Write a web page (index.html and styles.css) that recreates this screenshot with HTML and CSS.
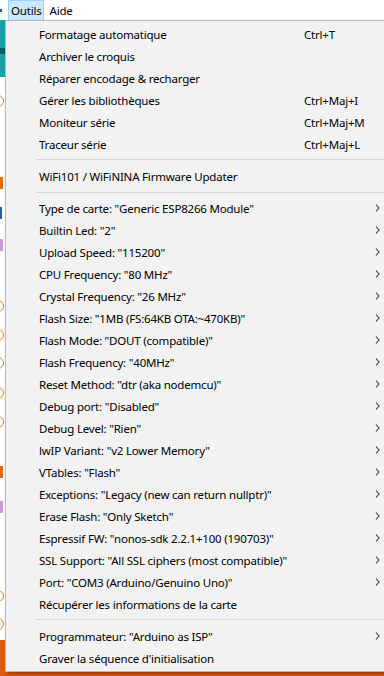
FILE: index.html
```html
<!DOCTYPE html>
<html lang="fr">
  <head>
    <meta charset="UTF-8" />
    <meta name="viewport" content="width=device-width, initial-scale=1"><title>Outils</title>
    <link rel="stylesheet" href="styles.css">
  </head>
  <body>
    <div class="menubar">
      <span class="menu-cut"></span>
      <span class="menu-title active">Outils</span>
      <span class="menu-title">Aide</span>
    </div>

    <div class="ide">
      <div class="toolbar"></div>
      <div class="toolbar-dark"></div>
      <div class="tabs"></div>
      <div class="editor">
        <span class="ring m18"></span>
        <span class="mark orange m70"></span>
        <span class="mark blue m18"></span>
        <span class="mark purple m20"></span>
        <span class="ring m49"></span>
        <span class="ring m17"></span>
        <span class="ring m16"></span>
        <span class="ring m18"></span>
        <span class="ring m17"></span>
        <span class="mark orange m38"></span>
        <span class="mark purple m23"></span>
        <span class="ring m77"></span>
        <span class="ring m16"></span>
      </div>
      <div class="console"></div>
    </div>

    <div class="dropdown">
      <div class="item"><span></span><span>Formatage automatique</span><span>Ctrl+T</span><span></span></div>
      <div class="item"><span></span><span>Archiver le croquis</span><span></span><span></span></div>
      <div class="item"><span></span><span>Réparer encodage &amp; recharger</span><span></span><span></span></div>
      <div class="item"><span></span><span>Gérer les bibliothèques</span><span>Ctrl+Maj+I</span><span></span></div>
      <div class="item"><span></span><span>Moniteur série</span><span>Ctrl+Maj+M</span><span></span></div>
      <div class="item"><span></span><span>Traceur série</span><span>Ctrl+Maj+L</span><span></span></div>
      <div class="sep"></div>
      <div class="item"><span></span><span>WiFi101 / WiFiNINA Firmware Updater</span><span></span><span></span></div>
      <div class="sep sep-low"></div>
      <div class="item sub"><span></span><span>Type de carte: "Generic ESP8266 Module"</span><span></span><span class="arrow"></span></div>
      <div class="item sub"><span></span><span>Builtin Led: "2"</span><span></span><span class="arrow"></span></div>
      <div class="item sub"><span></span><span>Upload Speed: "115200"</span><span></span><span class="arrow"></span></div>
      <div class="item sub"><span></span><span>CPU Frequency: "80 MHz"</span><span></span><span class="arrow"></span></div>
      <div class="item sub"><span></span><span>Crystal Frequency: "26 MHz"</span><span></span><span class="arrow"></span></div>
      <div class="item sub"><span></span><span>Flash Size: "1MB (FS:64KB OTA:~470KB)"</span><span></span><span class="arrow"></span></div>
      <div class="item sub"><span></span><span>Flash Mode: "DOUT (compatible)"</span><span></span><span class="arrow"></span></div>
      <div class="item sub"><span></span><span>Flash Frequency: "40MHz"</span><span></span><span class="arrow"></span></div>
      <div class="item sub"><span></span><span>Reset Method: "dtr (aka nodemcu)"</span><span></span><span class="arrow"></span></div>
      <div class="item sub"><span></span><span>Debug port: "Disabled"</span><span></span><span class="arrow"></span></div>
      <div class="item sub"><span></span><span>Debug Level: "Rien"</span><span></span><span class="arrow"></span></div>
      <div class="item sub"><span></span><span>lwIP Variant: "v2 Lower Memory"</span><span></span><span class="arrow"></span></div>
      <div class="item sub"><span></span><span>VTables: "Flash"</span><span></span><span class="arrow"></span></div>
      <div class="item sub"><span></span><span>Exceptions: "Legacy (new can return nullptr)"</span><span></span><span class="arrow"></span></div>
      <div class="item sub"><span></span><span>Erase Flash: "Only Sketch"</span><span></span><span class="arrow"></span></div>
      <div class="item sub"><span></span><span>Espressif FW: "nonos-sdk 2.2.1+100 (190703)"</span><span></span><span class="arrow"></span></div>
      <div class="item sub"><span></span><span>SSL Support: "All SSL ciphers (most compatible)"</span><span></span><span class="arrow"></span></div>
      <div class="item sub"><span></span><span>Port: "COM3 (Arduino/Genuino Uno)"</span><span></span><span class="arrow"></span></div>
      <div class="item"><span></span><span>Récupérer les informations de la carte</span><span></span><span></span></div>
      <div class="sep"></div>
      <div class="item sub"><span></span><span>Programmateur: "Arduino as ISP"</span><span></span><span class="arrow"></span></div>
      <div class="item"><span></span><span>Graver la séquence d'initialisation</span><span></span><span></span></div>
    </div>

    <script>
      // same chevron for every submenu entry
      const chevron =
        '<svg width="5" height="8" viewBox="0 0 5 8"><path d="M1 0.5 L4 4 L1 7.5" fill="none" stroke="#3c3c3c" stroke-width="1.1"/></svg>';
      document.querySelectorAll(".arrow").forEach((el) => (el.innerHTML = chevron));
    </script>
  </body>
</html>
```

FILE: styles.css
```css
body {
  margin: 0;
  width: 384px;
  height: 676px;
  overflow: hidden;
  position: relative;
  font-family: "Noto Sans", "Liberation Sans", sans-serif;
  font-size: 11.5px;
  letter-spacing: -0.2px;
  color: #000;
  background: #fff;
}

.menubar {
  height: 20px;
  display: flex;
  align-items: stretch;
  background: #fff;
}

.menu-cut {
  width: 2px;
  height: 3px;
  margin: 9px 6px 0 0;
  background: #1e5fb4;
}

.menu-title {
  padding: 0 3px 0 3px;
  line-height: 19px;
  border: 1px solid transparent;
  border-bottom: none;
}

.menu-title.active {
  background: #cce8ff;
  border-color: #99d1ff;
  padding: 0 2px 0 2px;
  margin-right: 1px;
}

.ide {
  height: 656px;
  display: flex;
  flex-direction: column;
}

.toolbar {
  height: 28px;
  background: #17a1a5;
}

.toolbar-dark {
  height: 6px;
  background: #006468;
}

.tabs {
  height: 23px;
  background: #17a1a5;
}

.editor {
  flex: 1;
  background: #fff;
  overflow: hidden;
}

.ring {
  display: block;
  width: 10px;
  height: 10px;
  margin-left: -8px;
  border: 1px solid #e5802f;
  border-radius: 50%;
}

.mark {
  display: block;
  width: 3px;
  height: 12px;
}

.m16 { margin-top: 16px; }
.m17 { margin-top: 17px; }
.m18 { margin-top: 18px; }
.m20 { margin-top: 20px; }
.m23 { margin-top: 23px; }
.m38 { margin-top: 38px; }
.m49 { margin-top: 49px; }
.m70 { margin-top: 70px; }
.m77 { margin-top: 77px; }

.orange { background: #e06a14; }
.blue { background: #1e5fb4; width: 2px; }
.purple { background: #c79ad8; }

.console {
  height: 36px;
  background: #e05a0c;
}

.dropdown {
  position: absolute;
  top: 20px;
  left: 5px;
  width: 381px;
  padding: 2px 0;
  background: #f2f2f2;
  border: 1px solid #b9b9b9;
  box-shadow: 2px 2px 3px rgba(0, 0, 0, 0.35);
}

.item {
  height: 22px;
  display: grid;
  grid-template-columns: 33px 265px 1fr 12px;
  align-items: center;
  white-space: nowrap;
}

.arrow {
  display: flex;
  align-items: center;
}

.sep {
  height: 1px;
  margin: 4px 2px 5px 30px;
  background: #d7d7d7;
}

.sep-low {
  margin: 5px 2px 4px 30px;
}
```
